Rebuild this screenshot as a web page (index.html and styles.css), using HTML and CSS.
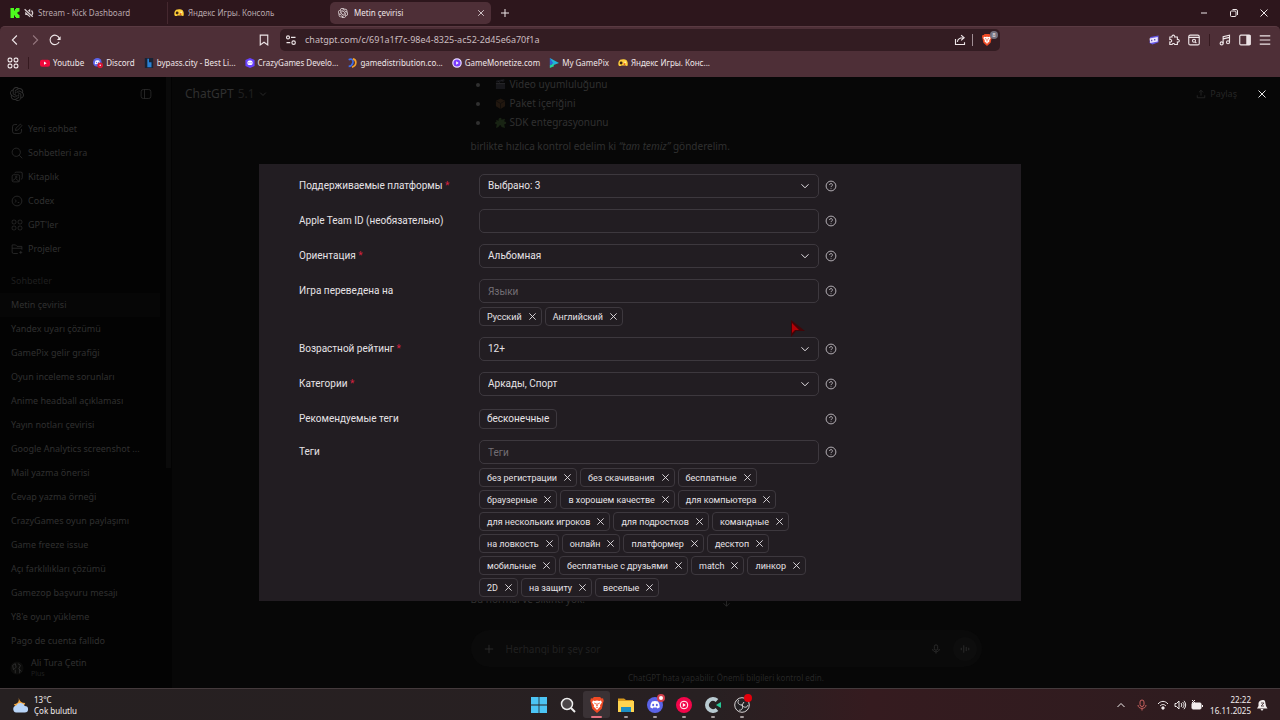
FILE: index.html
```html
<!DOCTYPE html>
<html lang="tr">
<head>
  <meta charset="UTF-8">
  <meta name="viewport" content="width=device-width, initial-scale=1.0">
  <title>Metin çevirisi</title>
  <link rel="stylesheet" href="styles.css">
</head>
<body>
  <svg class="sprite" aria-hidden="true">
    <symbol id="i-x" viewBox="0 0 10 10"><path d="M1.5 1.5l7 7M8.5 1.5l-7 7"/></symbol>
    <symbol id="i-down" viewBox="0 0 10 10"><path d="M1.5 3.3L5 6.8l3.5-3.5"/></symbol>
    <symbol id="i-help" viewBox="0 0 12 12"><circle cx="6" cy="6" r="4.9"/><path d="M4.6 5a1.4 1.4 0 1 1 2 1.2c-.5.2-.6.4-.6.9M6 8.4v.7"/></symbol>
    <symbol id="i-openai" viewBox="0 0 24 24">
      <path fill="currentColor" stroke="none" d="M22.2819 9.8211a5.9847 5.9847 0 0 0-.5157-4.9108 6.0462 6.0462 0 0 0-6.5098-2.9A6.0651 6.0651 0 0 0 4.9807 4.1818a5.9847 5.9847 0 0 0-3.9977 2.9 6.0462 6.0462 0 0 0 .7427 7.0966 5.98 5.98 0 0 0 .511 4.9107 6.051 6.051 0 0 0 6.5146 2.9001A5.9847 5.9847 0 0 0 13.2599 24a6.0557 6.0557 0 0 0 5.7718-4.2058 5.9894 5.9894 0 0 0 3.9977-2.9001 6.0557 6.0557 0 0 0-.7475-7.0729zm-9.022 12.6081a4.4755 4.4755 0 0 1-2.8764-1.0408l.1419-.0804 4.7783-2.7582a.7948.7948 0 0 0 .3927-.6813v-6.7369l2.02 1.1686a.071.071 0 0 1 .038.052v5.5826a4.504 4.504 0 0 1-4.4945 4.4944zm-9.6607-4.1254a4.4708 4.4708 0 0 1-.5346-3.0137l.142.0852 4.783 2.7582a.7712.7712 0 0 0 .7806 0l5.8428-3.3685v2.3324a.0804.0804 0 0 1-.0332.0615L9.74 19.9502a4.4992 4.4992 0 0 1-6.1408-1.6464zM2.3408 7.8956a4.485 4.485 0 0 1 2.3655-1.9728V11.6a.7664.7664 0 0 0 .3879.6765l5.8144 3.3543-2.0201 1.1685a.0757.0757 0 0 1-.071 0l-4.8303-2.7865A4.504 4.504 0 0 1 2.3408 7.872zm16.5963 3.8558L13.1038 8.364 15.1192 7.2a.0757.0757 0 0 1 .071 0l4.8303 2.7913a4.4944 4.4944 0 0 1-.6765 8.1042v-5.6772a.79.79 0 0 0-.407-.667zm2.0107-3.0231l-.142-.0852-4.7735-2.7818a.7759.7759 0 0 0-.7854 0L9.409 9.2297V6.8974a.0662.0662 0 0 1 .0284-.0615l4.8303-2.7866a4.4992 4.4992 0 0 1 6.6802 4.66zM8.3065 12.863l-2.02-1.1638a.0804.0804 0 0 1-.038-.0567V6.0742a4.4992 4.4992 0 0 1 7.3757-3.4537l-.142.0805L8.704 5.459a.7948.7948 0 0 0-.3927.6813zm1.0976-2.3654l2.602-1.4998 2.6069 1.4998v2.9994l-2.5974 1.4997-2.6067-1.4997Z"/>
    </symbol>
    <symbol id="i-yandex" viewBox="0 0 14 12"><path fill="#ffcf3a" stroke="none" d="M3 1.5C5 .2 10 .2 12 2c1.500 1.500 2 5 1.500 7-.4 1.600-2 1.300-3 .5H5C3 11 .8 10.500.5 8 .3 5.500 1 3 3 1.500z"/><circle cx="4.400" cy="6" r="2" fill="#3c2413" stroke="none"/><circle cx="10" cy="4.800" r="1" fill="#fff" stroke="none"/><circle cx="9" cy="7.500" r="1.200" fill="#d9442a" stroke="none"/></symbol>
    <symbol id="i-discord" viewBox="0 0 16 16"><circle cx="8" cy="8" r="8" fill="#5b63e8" stroke="none"/><path fill="#fff" stroke="none" d="M5 4.500Q8 3.600 11 4.500 12.800 7 12.800 10.300 11.500 11.400 10.300 11.500L9.700 10.500H6.300L5.700 11.500Q4.500 11.400 3.200 10.300 3.200 7 5 4.500z"/><ellipse cx="6.200" cy="8" rx="1" ry="1.200" fill="#5b63e8" stroke="none"/><ellipse cx="9.800" cy="8" rx="1" ry="1.200" fill="#5b63e8" stroke="none"/></symbol>
    <symbol id="i-brave" viewBox="0 0 16 18"><path fill="#f04a24" stroke="none" d="M4.500 0h7l1.500 1.600 1.800-.1.800 3-.6 1.500-1.600 7.200L8 18l-5.400-4.800L1 6 .4 4.500l.8-3 1.800.1z"/><path fill="#fff" stroke="none" d="M3.500 4l2 .4L8 4l2.500.4 2-.4 1 2.200-2.200 3 .5 1.500L8 14.500l-3.800-3.800.5-1.500-2.200-3z"/><path fill="#f04a24" stroke="none" d="M4.500 6.300l2.200.6-.6 1.400zM11.500 6.300l-2.200.6.6 1.400zM7.500 7h1l.3 3-0.800.6-.8-.6zM6.500 11.500h3L8 12.700z"/></symbol>
    <symbol id="i-grid" viewBox="0 0 16 16"><rect x="1.500" y="1.500" width="5" height="5" rx="1.800"/><rect x="9.500" y="1.500" width="5" height="5" rx="1.800"/><rect x="1.500" y="9.500" width="5" height="5" rx="1.800"/><rect x="9.500" y="9.500" width="5" height="5" rx="1.800"/></symbol>
  </svg>

  <header class="browser">
    <div class="tabs">
      <a class="tab" href="#">
        <svg class="icon" viewBox="0 0 10 10"><path fill="#4dfa1e" stroke="none" d="M.5 0H4v2.500h1V1h1V0h3.500v3.500h-1V4h-1v2h1v1h1v3H6V9H5V7.500H4V10H.5z"/></svg>
        <svg class="icon" viewBox="0 0 16 16"><path fill="#d8cfd1" stroke="none" d="M2 5h3l5-4v14l-5-4H2z"/><path stroke="#2d161c" stroke-width="4" d="M1 2l13 12"/><path stroke="#d8cfd1" stroke-width="2" d="M1 2l13 12M12 4c2 2 2 5 1 7"/></svg>
        <span>Stream - Kick Dashboard</span>
      </a>
      <a class="tab divided" href="#">
        <svg class="icon"><use href="#i-yandex"/></svg>
        <span>Яндекс Игры. Консоль</span>
      </a>
      <a class="tab active" href="#">
        <svg class="icon"><use href="#i-openai"/></svg>
        <span>Metin çevirisi</span>
        <button class="tab-close" aria-label="Kapat"><svg><use href="#i-x"/></svg></button>
      </a>
      <button class="new-tab" aria-label="Yeni sekme"><svg class="icon" viewBox="0 0 10 10"><path d="M5 1v8M1 5h8"/></svg></button>
      <div class="window-buttons">
        <button aria-label="Simge durumu"><svg class="icon" viewBox="0 0 10 10"><path d="M2 5h6"/></svg></button>
        <button aria-label="Önceki boyut"><svg class="icon" viewBox="0 0 10 10"><rect x="1.500" y="3" width="5.500" height="5.500" rx="1"/><path d="M3.500 1.500h3.500a1.500 1.500 0 0 1 1.500 1.500v4"/></svg></button>
        <button aria-label="Pencereyi kapat"><svg class="icon"><use href="#i-x"/></svg></button>
      </div>
    </div>

    <div class="toolbar">
      <div class="nav">
        <button aria-label="Geri"><svg viewBox="0 0 16 16"><path d="M10.500 2L4.500 8l6 6"/></svg></button>
        <button class="dim" aria-label="İleri"><svg viewBox="0 0 16 16"><path d="M5.500 2l6 6-6 6"/></svg></button>
        <button aria-label="Yenile"><svg viewBox="0 0 16 16"><path d="M13.500 10.500A6.300 6.300 0 1 1 13.800 6"/><path fill="currentColor" stroke="none" d="M15.500 3v5h-5z"/></svg></button>
        <button class="bookmark-btn" aria-label="Yer imi"><svg viewBox="0 0 16 16"><path d="M3 1.500h10v13L8 11l-5 3.500z"/></svg></button>
      </div>
      <div class="address">
        <svg viewBox="0 0 16 16"><circle cx="4" cy="4.500" r="2"/><path d="M8 4.500h6M2 11.500h5"/><circle cx="11.500" cy="11.500" r="2.300"/></svg>
        <input type="text" aria-label="Adres" value="chatgpt.com/c/691a1f7c-98e4-8325-ac52-2d45e6a70f1a">
        <button aria-label="Bağlantıyı paylaş"><svg viewBox="0 0 16 16"><path d="M2 6.500V14h12v-3M4.500 10.500c.5-4 3-5.500 7.500-5.500M9.500 1.500L13.500 5l-4 3.500"/></svg></button>
        <span class="line"></span>
        <button class="shield" aria-label="Brave Shields"><svg><use href="#i-brave"/></svg><span class="count">8</span></button>
      </div>
      <div class="extensions">
        <button aria-label="Uzantı"><svg viewBox="0 0 16 16"><path fill="#6658e8" stroke="none" d="M3 4l11-2v9L6 14 2 12z"/><path fill="#eee8ff" stroke="none" d="M2 6l11-2v6L3 12z"/><path stroke="#493aa8" d="M5 7.500v2M9 6.500v2"/></svg></button>
        <button aria-label="Uzantılar"><svg viewBox="0 0 16 16"><path d="M2.500 4h2.800a1.900 1.900 0 1 1 3.600 0h3.600v3.200a1.900 1.900 0 1 1 0 3.600V14H9a1.900 1.900 0 0 0-3.600 0h-3v-3.200a1.900 1.900 0 1 0 0-3.600z"/></svg></button>
        <button aria-label="Sekme ara"><svg viewBox="0 0 16 16"><rect x="1" y="1.500" width="14" height="13" rx="2"/><path d="M1 4.500h14M9.500 10.500l1.700 1.700"/><circle cx="8" cy="9" r="2"/></svg></button>
        <span class="line"></span>
        <button aria-label="Medya"><svg viewBox="0 0 16 16"><circle cx="3.500" cy="12.500" r="2"/><circle cx="12" cy="11" r="2"/><path d="M5.500 12.500V3.500L14 1.500V11M5.500 6.500L14 4.500"/></svg></button>
        <button aria-label="Kenar çubuğu"><svg viewBox="0 0 16 16"><rect x="1" y="1.500" width="14" height="13" rx="1.500"/><path fill="#ece2e5" d="M10.500 2H14.500v12h-4z"/></svg></button>
        <button aria-label="Menü"><svg viewBox="0 0 16 16"><path d="M1 2.500h14M1 8h14M1 13.500h14"/></svg></button>
      </div>
    </div>

    <nav class="bookmarks">
      <button class="apps" aria-label="Uygulamalar"><svg><use href="#i-grid"/></svg></button>
      <a href="#"><svg class="icon" viewBox="0 0 12 12"><rect y="2" width="12" height="8.500" rx="2.500" fill="#f0093c" stroke="none"/><path fill="#fff" stroke="none" d="M4.800 4.300L8 6.200 4.800 8z"/></svg><span>Youtube</span></a>
      <a href="#"><svg class="icon" viewBox="0 0 16 16"><use href="#i-discord" width="14" height="14"/><circle cx="11.500" cy="11.500" r="4.500" fill="#d81532" stroke="none"/><circle cx="11.500" cy="11.500" r="1.200" fill="#fff" stroke="none"/></svg><span>Discord</span></a>
      <a href="#"><svg class="icon" viewBox="0 0 12 12"><rect x="1" width="10" height="12" fill="#182336" stroke="none"/><path fill="#2a80d4" stroke="none" d="M4 1h2v4h3v6H4z"/></svg><span>bypass.city - Best Li...</span></a>
      <a href="#"><svg class="icon" viewBox="0 0 12 12"><path fill="#6842ff" stroke="none" d="M6 0l5.500 2.500v7L6 12 .5 9.500v-7z"/><rect x="3" y="3" width="6" height="5.500" rx="2" fill="#fff" stroke="none"/><path stroke="#6842ff" d="M4.700 5v1.500M7.300 5v1.500"/></svg><span>CrazyGames Develo...</span></a>
      <a href="#"><svg class="icon" viewBox="0 0 12 12"><path stroke="#3f6ee8" stroke-width="2" d="M2 2c4-2 6 1 5 4-1 3-3 4-5 4"/><path stroke="#f2a12c" stroke-width="2" d="M7 1c5 1 5 8-1 10"/></svg><span>gamedistribution.co...</span></a>
      <a href="#"><svg class="icon" viewBox="0 0 12 12"><circle cx="6" cy="6" r="5" fill="#7a3cff" stroke="#e8dcff" stroke-width="1.500"/><path fill="#fff" stroke="none" d="M5 4l3 2-3 2z"/></svg><span>GameMonetize.com</span></a>
      <a href="#"><svg class="icon" viewBox="0 0 12 12"><path fill="#20b7d8" stroke="none" d="M1 0l11 6-8 3z"/><path fill="#2b65d9" stroke="none" d="M1 0l4 6-4 4z"/><path fill="#26d59b" stroke="none" d="M1 9l4-2 1 3-5 2z"/></svg><span>My GamePix</span></a>
      <a href="#"><svg class="icon"><use href="#i-yandex"/></svg><span>Яндекс Игры. Конс...</span></a>
    </nav>
  </header>

  <div class="page">
    <aside class="sidebar">
      <div class="sidebar-top">
        <svg class="logo"><use href="#i-openai"/></svg>
        <svg viewBox="0 0 16 16"><rect x="1.500" y="2" width="13" height="12" rx="3"/><path d="M6 2v12"/></svg>
      </div>
      <nav class="menu">
        <a href="#"><svg viewBox="0 0 16 16"><path d="M8 2H5a3 3 0 0 0-3 3v6a3 3 0 0 0 3 3h6a3 3 0 0 0 3-3V8M6 10l.5-3 6-5.500 2 2L9 9.500z"/></svg>Yeni sohbet</a>
        <a href="#"><svg viewBox="0 0 16 16"><circle cx="7" cy="7" r="5.500"/><path d="M11 11l4 4"/></svg>Sohbetleri ara</a>
        <a href="#"><svg viewBox="0 0 16 16"><rect x="1.500" y="5" width="10" height="9.500" rx="2"/><path d="M5 3a2 2 0 0 1 2-1.500h6A2 2 0 0 1 15 4v5a2 2 0 0 1-1.500 2M2 13l4-3 5 4"/><circle cx="7" cy="8" r="1"/></svg>Kitaplık</a>
        <a href="#"><svg viewBox="0 0 16 16"><circle cx="8" cy="8" r="6.500"/><path d="M5.500 6l1.500 2-1.500 2M9 10h2"/></svg>Codex</a>
        <a href="#"><svg><use href="#i-grid"/></svg>GPT'ler</a>
        <a href="#"><svg viewBox="0 0 16 16"><path d="M9 14H3.500a2 2 0 0 1-2-2V2.500H6L8 4.500h6.500V9M1.500 7h13M13 10.500v4M11 12.500h4"/></svg>Projeler</a>
      </nav>
      <nav class="chats">
        <h2>Sohbetler</h2>
        <a class="current" href="#">Metin çevirisi</a>
        <a href="#">Yandex uyarı çözümü</a>
        <a href="#">GamePix gelir grafiği</a>
        <a href="#">Oyun inceleme sorunları</a>
        <a href="#">Anime headball açıklaması</a>
        <a href="#">Yayın notları çevirisi</a>
        <a href="#">Google Analytics screenshot ...</a>
        <a href="#">Mail yazma önerisi</a>
        <a href="#">Cevap yazma örneği</a>
        <a href="#">CrazyGames oyun paylaşımı</a>
        <a href="#">Game freeze issue</a>
        <a href="#">Açı farklılıkları çözümü</a>
        <a href="#">Gamezop başvuru mesajı</a>
        <a href="#">Y8'e oyun yükleme</a>
        <a href="#">Pago de cuenta fallido</a>
      </nav>
      <div class="account">
        <svg viewBox="0 0 16 16"><circle cx="8" cy="8" r="7.500" fill="#0c0c0b" stroke="none"/><path d="M3 5l3-2 1 4-3 3zM9 3l3 2-2 4 3 3M6 10v4M11 9v5"/></svg>
        <div>
          <div>Ali Tura Çetin</div>
          <small>Plus</small>
        </div>
      </div>
    </aside>

    <main class="chat">
      <div class="chat-top">
        <button class="model">ChatGPT <span>5.1</span> <svg><use href="#i-down"/></svg></button>
        <button class="share"><svg viewBox="0 0 12 12"><path d="M1.500 7.500v3h9v-3M6 8V1.500M3.500 4L6 1.500 8.500 4"/></svg>Paylaş</button>
      </div>
      <div class="thread">
        <ul>
          <li><svg viewBox="0 0 12 12"><path fill="#17171b" stroke="none" d="M1 5h10v6H1zM1 2l9-2 .5 2L1.500 4z"/><path stroke="#29292d" d="M1 5h10M3 2l2 2M7 1l2 2"/></svg>Video uyumluluğunu</li>
          <li><svg viewBox="0 0 12 12"><path fill="#21170f" stroke="none" d="M6 .5l5 2.500v6l-5 3-5-3V3z"/><path stroke="#120d0a" d="M1 3l5 3 5-3M6 6v6"/></svg>Paket içeriğini</li>
          <li><svg viewBox="0 0 12 12"><path fill="#182313" stroke="none" d="M1 3l3 1c-1-4 4-4 3-1l4-1-1 3c3 0 3 3 0 3l1 4-4-1c0-3-3-2-3 0l-3 1 1-4c-3 0-2-3 0-3z"/></svg>SDK entegrasyonunu</li>
        </ul>
        <p>birlikte hızlıca kontrol edelim ki <em>“tam temiz”</em> gönderelim.</p>
        <p class="last">Bu normal ve sıkıntı yok.</p>
        <svg class="to-bottom" viewBox="0 0 12 12"><path d="M6 1v10M2 7l4 4 4-4"/></svg>
      </div>
      <div class="composer">
        <svg viewBox="0 0 12 12"><path d="M6 1v10M1 6h10"/></svg>
        <input type="text" aria-label="Mesaj" placeholder="Herhangi bir şey sor">
        <svg viewBox="0 0 12 12"><rect x="4" y="1" width="4" height="6.500" rx="2"/><path d="M2 6c0 4.500 8 4.500 8 0M6 9.500v2"/></svg>
        <button aria-label="Sesli mod"><svg viewBox="0 0 12 12"><path d="M1.500 4.500v3M4.500 1.500v9M7.500 3.500v5M10.500 4.500v3"/></svg></button>
      </div>
      <p class="note">ChatGPT hata yapabilir. Önemli bilgileri kontrol edin.</p>
    </main>

    <div class="overlay">
      <button class="close" aria-label="Kapat"><svg><use href="#i-x"/></svg></button>
      <form class="dialog">
        <div class="row">
          <label for="platforms">Поддерживаемые платформы <b>*</b></label>
          <div class="field"><div class="select"><select id="platforms"><option>Выбрано: 3</option></select><svg><use href="#i-down"/></svg></div></div>
          <svg class="help"><use href="#i-help"/></svg>
        </div>
        <div class="row">
          <label for="team">Apple Team ID (необязательно)</label>
          <div class="field"><input id="team" type="text"></div>
          <svg class="help"><use href="#i-help"/></svg>
        </div>
        <div class="row">
          <label for="orientation">Ориентация <b>*</b></label>
          <div class="field"><div class="select"><select id="orientation"><option>Альбомная</option></select><svg><use href="#i-down"/></svg></div></div>
          <svg class="help"><use href="#i-help"/></svg>
        </div>
        <div class="row">
          <label for="langs">Игра переведена на</label>
          <div class="field">
            <input id="langs" type="text" placeholder="Языки">
            <div class="chips">
              <span class="chip">Русский<button type="button" aria-label="Удалить"><svg><use href="#i-x"/></svg></button></span>
              <span class="chip">Английский<button type="button" aria-label="Удалить"><svg><use href="#i-x"/></svg></button></span>
            </div>
          </div>
          <svg class="help"><use href="#i-help"/></svg>
        </div>
        <div class="row">
          <label for="age">Возрастной рейтинг <b>*</b></label>
          <div class="field"><div class="select"><select id="age"><option>12+</option></select><svg><use href="#i-down"/></svg></div></div>
          <svg class="help"><use href="#i-help"/></svg>
        </div>
        <div class="row">
          <label for="categories">Категории <b>*</b></label>
          <div class="field"><div class="select"><select id="categories"><option>Аркады, Спорт</option></select><svg><use href="#i-down"/></svg></div></div>
          <svg class="help"><use href="#i-help"/></svg>
        </div>
        <div class="row suggested">
          <span class="label">Рекомендуемые теги</span>
          <div class="field"><button type="button" class="suggestion">бесконечные</button></div>
          <svg class="help"><use href="#i-help"/></svg>
        </div>
        <div class="row">
          <label for="tags">Теги</label>
          <div class="field">
            <input id="tags" type="text" placeholder="Теги">
            <div class="chips">
              <span class="chip">без регистрации<button type="button" aria-label="Удалить"><svg><use href="#i-x"/></svg></button></span>
              <span class="chip">без скачивания<button type="button" aria-label="Удалить"><svg><use href="#i-x"/></svg></button></span>
              <span class="chip">бесплатные<button type="button" aria-label="Удалить"><svg><use href="#i-x"/></svg></button></span>
              <span class="chip">браузерные<button type="button" aria-label="Удалить"><svg><use href="#i-x"/></svg></button></span>
              <span class="chip">в хорошем качестве<button type="button" aria-label="Удалить"><svg><use href="#i-x"/></svg></button></span>
              <span class="chip">для компьютера<button type="button" aria-label="Удалить"><svg><use href="#i-x"/></svg></button></span>
              <span class="chip">для нескольких игроков<button type="button" aria-label="Удалить"><svg><use href="#i-x"/></svg></button></span>
              <span class="chip">для подростков<button type="button" aria-label="Удалить"><svg><use href="#i-x"/></svg></button></span>
              <span class="chip">командные<button type="button" aria-label="Удалить"><svg><use href="#i-x"/></svg></button></span>
              <span class="chip">на ловкость<button type="button" aria-label="Удалить"><svg><use href="#i-x"/></svg></button></span>
              <span class="chip">онлайн<button type="button" aria-label="Удалить"><svg><use href="#i-x"/></svg></button></span>
              <span class="chip">платформер<button type="button" aria-label="Удалить"><svg><use href="#i-x"/></svg></button></span>
              <span class="chip">десктоп<button type="button" aria-label="Удалить"><svg><use href="#i-x"/></svg></button></span>
              <span class="chip">мобильные<button type="button" aria-label="Удалить"><svg><use href="#i-x"/></svg></button></span>
              <span class="chip">бесплатные с друзьями<button type="button" aria-label="Удалить"><svg><use href="#i-x"/></svg></button></span>
              <span class="chip">match<button type="button" aria-label="Удалить"><svg><use href="#i-x"/></svg></button></span>
              <span class="chip">линкор<button type="button" aria-label="Удалить"><svg><use href="#i-x"/></svg></button></span>
              <span class="chip">2D<button type="button" aria-label="Удалить"><svg><use href="#i-x"/></svg></button></span>
              <span class="chip">на защиту<button type="button" aria-label="Удалить"><svg><use href="#i-x"/></svg></button></span>
              <span class="chip">веселые<button type="button" aria-label="Удалить"><svg><use href="#i-x"/></svg></button></span>
            </div>
          </div>
          <svg class="help"><use href="#i-help"/></svg>
        </div>
        <svg class="cursor" viewBox="0 0 14 18"><path fill="#430508" stroke="none" d="M0 0l14 11H5l-5 6z"/><path fill="#b40006" stroke="none" d="M1 3l7 7H4l-3 3z"/></svg>
      </form>
    </div>
  </div>

  <footer class="taskbar">
    <div class="weather">
      <svg viewBox="0 0 18 16"><path fill="#f3a63c" stroke="none" d="M7 0c1 4 3 6 7 6-1 5-10 6-12 1 4 0 6-3 5-7z"/><path fill="#b9d5f8" stroke="none" d="M4.500 16a3.800 3.800 0 0 1 0-7.500 5 5 0 0 1 9 .5 3.500 3.500 0 0 1 0 7z"/></svg>
      <div>
        <div>13°C</div>
        <div>Çok bulutlu</div>
      </div>
    </div>
    <div class="apps-row">
      <button aria-label="Başlat"><svg viewBox="0 0 16 16"><path fill="#4cc5f5" stroke="none" d="M0 0h7.600v7.600H0zM8.400 0H16v7.600H8.400zM0 8.400h7.600V16H0zM8.400 8.400H16V16H8.400z"/></svg></button>
      <button aria-label="Ara"><svg viewBox="0 0 16 16"><circle cx="7" cy="7" r="5.500" fill="#4b4648" stroke="#eee" stroke-width="1.500"/><path stroke="#eee" stroke-width="2" d="M11 11l4 4"/></svg></button>
      <button class="focused" aria-label="Brave"><svg><use href="#i-brave"/></svg></button>
      <button class="open" aria-label="Dosya Gezgini"><svg viewBox="0 0 16 16"><path fill="#d99a1c" stroke="none" d="M0 1.500h6L8 3h7v5H0z"/><path fill="#ffd44f" stroke="none" d="M0 4h16v11H0z"/><path fill="#1c8fc4" stroke="none" d="M3 10h10v5H3z"/></svg></button>
      <button class="open" aria-label="Discord"><svg><use href="#i-discord"/></svg><span class="badge live"></span></button>
      <button class="open" aria-label="YouTube Music"><svg viewBox="0 0 16 16"><circle cx="8" cy="8" r="8" fill="#f4054a" stroke="none"/><circle cx="8" cy="8" r="3.800" stroke="#fff"/><path fill="#fff" stroke="none" d="M6.800 6l3 2-3 2z"/></svg></button>
      <button class="open" aria-label="Camtasia"><svg viewBox="0 0 16 16"><path stroke="#b9cbd2" stroke-width="4" d="M12 3.500A6 6 0 1 0 12 12.500"/><path fill="#27c796" stroke="none" d="M11 8l5-3v6z"/></svg></button>
      <button class="open" aria-label="OBS"><svg viewBox="0 0 16 16"><circle cx="8" cy="8" r="7.300" fill="#252225" stroke="#d7d2d3"/><path stroke="#d7d2d3" d="M8 8C4 8 3 5 5 3M8 8c2 3 5 3 6 0M8 8c2 3-1 6-3 5M8 8l2-3"/></svg><span class="badge"></span></button>
    </div>
    <div class="tray">
      <svg viewBox="0 0 12 12"><path d="M2.500 8L6 4.500 9.500 8"/></svg>
      <svg class="mic" viewBox="0 0 12 12"><rect x="4" y="1" width="4" height="6.500" rx="2"/><path d="M2 6c0 4.500 8 4.500 8 0M6 9.500v2"/></svg>
      <svg viewBox="0 0 12 12"><path d="M1 5c3-3.500 7-3.500 10 0M3 7c2-2 4-2 6 0"/><circle cx="6" cy="9" r="1.200" fill="#f2eeee"/></svg>
      <svg viewBox="0 0 12 12"><path d="M1 4.500h1.500L5 2v8L2.500 7.500H1zM7 4c1 1 1 3 0 4M8.500 3c2 2 2 4 0 6M10 1.800c2.200 3 2.200 5.500 0 8.400"/></svg>
      <svg viewBox="0 0 12 12"><rect x="1" y="4" width="9" height="6" rx="1" fill="#f2eeee"/><path d="M11.500 6v2M1 1l3 3M4 1L1 4"/></svg>
      <div class="clock">
        <div>22:22</div>
        <div>16.11.2025</div>
      </div>
      <svg viewBox="0 0 12 12"><path fill="#f2eeee" stroke="none" d="M1 9.500L2.500 7V4C3 1 8 0 9 2l1 5 1.500 2.500zM4.500 10h3l-1.500 2z"/><path stroke="#5d4c4f" d="M5 4h3L5 7h3"/></svg>
    </div>
  </footer>
</body>
</html>
```

FILE: styles.css
```css
* {
  box-sizing: border-box;
}

body {
  margin: 0;
  height: 100vh;
  display: flex;
  flex-direction: column;
  overflow: hidden;
  background: #2d161c;
  color: #eee6e8;
  font-family: "Noto Sans", "Open Sans", sans-serif;
  font-size: 9px;
  line-height: 12px;
}

a {
  color: inherit;
  text-decoration: none;
}

button,
input,
select {
  font: inherit;
  color: inherit;
  background: none;
  border: none;
  padding: 0;
  margin: 0;
}

input:focus,
select:focus {
  outline: none;
}

button {
  display: flex;
  align-items: center;
  justify-content: center;
}

svg {
  width: 12px;
  height: 12px;
  flex: none;
  fill: none;
  stroke: currentColor;
  overflow: visible;
}

.sprite {
  position: absolute;
  width: 0;
  height: 0;
}

.icon {
  width: 10px;
  height: 10px;
}

.line {
  width: 1px;
  height: 12px;
  background: #806a70;
}

/* Browser chrome */
.tabs,
.bookmarks {
  font-size: 8px;
}

.tabs {
  display: flex;
  align-items: center;
  height: 26px;
  padding: 0 1px 0 4px;
}

.tab {
  display: flex;
  align-items: center;
  gap: 4px;
  width: 163px;
  height: 22px;
  padding: 0 6px;
  color: #b9a8ad;
}

.tab.divided {
  border-left: 1px solid #45282f;
}

.tab.active {
  width: 161px;
  padding-left: 8px;
  border-radius: 5px;
  background: #4e2f37;
  color: #eee6e8;
}

.tab.active span {
  padding-left: 2px;
}

.tab-close {
  margin-left: auto;
}

.tab-close svg {
  width: 8px;
  height: 8px;
}

.new-tab {
  width: 28px;
}

.window-buttons {
  display: flex;
  margin-left: auto;
}

.window-buttons button {
  width: 30px;
}

.toolbar {
  display: flex;
  align-items: center;
  height: 27px;
  padding: 0 9px;
  background: #4e2f37;
  border-top: 1px solid #5a3a42;
  border-radius: 5px 5px 0 0;
}

.toolbar svg,
.apps svg {
  stroke-width: 1.5;
}

.nav,
.extensions {
  display: flex;
  align-items: center;
  flex: 1;
  gap: 8px;
}

.nav .dim {
  color: #94767e;
}

.bookmark-btn {
  margin-left: auto;
  margin-right: 10px;
}

.address {
  display: flex;
  align-items: center;
  gap: 6px;
  flex: 0 1 720px;
  height: 22px;
  padding: 0 1px 0 5px;
  border-radius: 5px;
  background: #331c22;
}

.address input {
  flex: 1;
  color: #cbbcc0;
  padding-left: 2px;
}

.address .line {
  background: #a08e94;
}

.shield {
  position: relative;
  width: 20px;
}

.shield svg {
  margin-right: 4px;
}

.count {
  position: absolute;
  top: -3px;
  right: 1px;
  width: 8px;
  height: 8px;
  border-radius: 4px;
  background: #73707d;
  font-size: 6px;
  line-height: 8px;
}

.extensions {
  justify-content: flex-end;
}

.extensions .line {
  background: #35191f;
  margin: 0 1px;
}

.bookmarks {
  display: flex;
  align-items: center;
  gap: 9px;
  height: 24px;
  padding: 0 7px 4px;
  background: #4e2f37;
}

.bookmarks a {
  display: flex;
  align-items: center;
  gap: 3px;
}

.apps {
  margin-right: 2px;
  padding-right: 9px;
  border-right: 1px solid #35191f;
}

/* Page behind the dialog */
.page {
  position: relative;
  display: flex;
  flex: 1;
  min-height: 0;
  background: #070707;
  color: #303030;
}

.sidebar {
  display: flex;
  flex-direction: column;
  width: 172px;
  padding: 7px 0 0;
  background: #030303;
  background-image: linear-gradient(#0a0a0a, #0a0a0a);
  background-size: 5px 391px;
  background-position: 166px 0;
  background-repeat: no-repeat;
}

.sidebar-top {
  display: flex;
  align-items: center;
  justify-content: space-between;
  height: 20px;
  padding: 0 20px 0 10px;
}

.logo {
  width: 14px;
  height: 14px;
}

.menu {
  padding-top: 13px;
}

.menu a,
.chats a,
.chats h2 {
  display: flex;
  align-items: center;
  gap: 5px;
  height: 24px;
  padding-left: 11px;
}

.chats {
  padding-top: 8px;
}

.chats h2 {
  margin: 0;
  font-size: 9px;
  font-weight: 400;
  color: #1f1f1f;
}

.chats .current {
  margin-right: 12px;
  background: #060606;
}

.account {
  display: flex;
  align-items: center;
  gap: 7px;
  padding: 4px 10px 0;
}

.account svg {
  width: 14px;
  height: 14px;
}

.account small {
  display: block;
  font-size: 7px;
  line-height: 10px;
  color: #1f1f1f;
}

.chat {
  position: relative;
  display: flex;
  flex-direction: column;
  align-items: center;
  flex: 1;
  min-width: 0;
}

.chat-top {
  position: absolute;
  top: 0;
  left: 0;
  right: 0;
  display: flex;
  justify-content: space-between;
  height: 34px;
  padding: 0 43px 0 13px;
}

.model {
  gap: 4px;
  font-size: 12px;
}

.model span {
  color: #1f1f1f;
}

.model svg {
  width: 8px;
  height: 8px;
}

.share {
  gap: 4px;
  color: #262626;
}

.share svg {
  width: 10px;
}

.thread {
  position: relative;
  display: flex;
  flex-direction: column;
  flex: 1;
  width: 100%;
  max-width: 511px;
  margin-top: -2px;
  font-size: 10px;
  line-height: 18px;
}

.thread ul {
  margin: 0;
  padding-left: 19px;
}

.thread li {
  padding: 0 0 1px;
}

.thread li svg {
  width: 11px;
  height: 11px;
  margin-left: 5px;
  margin-right: 4px;
  vertical-align: -2px;
}

.thread p {
  margin: 5px 0;
}

.thread .last {
  margin-top: auto;
  margin-bottom: 22px;
}

.to-bottom {
  position: absolute;
  left: 0;
  right: 0;
  bottom: 23px;
  width: 9px;
  height: 9px;
  margin: 0 auto;
}

.composer {
  display: flex;
  align-items: center;
  gap: 12px;
  width: 100%;
  max-width: 511px;
  height: 37px;
  padding: 0 5px 0 13px;
  border-radius: 19px;
  background: #0a0a0a;
  font-size: 10px;
}

.composer svg {
  width: 10px;
  height: 10px;
}

.composer input {
  flex: 1;
}

.composer input::placeholder {
  color: #202020;
  opacity: 1;
}

.composer button {
  width: 24px;
  height: 24px;
  border-radius: 12px;
  background: #0d0d0d;
}

.note {
  margin: 5px 0 4px;
  font-size: 8px;
  color: #262626;
}

/* Dialog */
.overlay {
  position: absolute;
  inset: 0;
  display: flex;
  align-items: center;
  justify-content: center;
}

.close {
  position: absolute;
  top: 12px;
  right: 13px;
  color: #e6e6e6;
}

.close svg {
  width: 10px;
  height: 10px;
}

.dialog {
  position: relative;
  display: flex;
  flex-direction: column;
  gap: 11px;
  width: 762px;
  max-width: 100%;
  padding: 10px 40px 4px;
  background: #221d22;
  color: #e6e2e6;
  font-family: Roboto, "Noto Sans", sans-serif;
  font-size: 10px;
}

.row {
  display: flex;
  align-items: flex-start;
}

.row label,
.row .label {
  width: 180px;
  line-height: 24px;
}

.row b {
  color: #d4213f;
  font-weight: 400;
}

.field {
  width: 340px;
}

.field input,
.field select {
  display: block;
  width: 100%;
  height: 24px;
  padding: 0 8px;
  border: 1px solid #3d383e;
  border-radius: 5px;
  appearance: none;
}

.field input::placeholder {
  color: #736e74;
  opacity: 1;
}

.select {
  position: relative;
}

.select svg {
  position: absolute;
  top: 7px;
  right: 9px;
  width: 10px;
  height: 10px;
  pointer-events: none;
}

.help {
  margin: 6px 0 0 6px;
  color: #b3aeb4;
}

.chips {
  display: flex;
  flex-wrap: wrap;
  gap: 3px;
  padding-top: 4px;
}

.chip,
.suggestion {
  display: flex;
  align-items: center;
  gap: 6px;
  height: 19px;
  padding: 0 4px 0 7px;
  border: 1px solid #3d383e;
  border-radius: 4px;
  font-size: 9px;
}

.chip svg {
  width: 9px;
  height: 9px;
  display: block;
}

.suggested {
  padding-top: 2px;
}

.suggested .label {
  line-height: 20px;
}

.suggestion {
  height: 20px;
  padding: 0 7px;
  font-size: 10px;
}

.suggested .help {
  margin-top: 4px;
}

.cursor {
  position: absolute;
  top: 156px;
  left: 532px;
  width: 14px;
  height: 18px;
}

/* Windows taskbar */
.taskbar {
  display: flex;
  align-items: center;
  height: 32px;
  border-top: 1px solid #443a3c;
  background: linear-gradient(90deg, #262021 0%, #282022 56%, #351b1f 68%, #2d1c1f 100%);
  color: #f2eeee;
  font-size: 8px;
  line-height: 11px;
}

.weather,
.tray {
  display: flex;
  align-items: center;
  flex: 1;
}

.weather {
  gap: 5px;
  padding-left: 12px;
}

.weather svg {
  width: 17px;
  height: 16px;
}

.apps-row {
  display: flex;
  gap: 2px;
}

.apps-row button {
  position: relative;
  width: 27px;
  height: 27px;
  border-radius: 3px;
}

.apps-row svg {
  width: 16px;
  height: 16px;
}

.apps-row .focused {
  background: #3a3235;
}

.apps-row .open::after,
.apps-row .focused::after {
  content: "";
  position: absolute;
  bottom: 0;
  width: 4px;
  height: 2px;
  border-radius: 1px;
  background: #a59c9e;
}

.apps-row .focused::after {
  width: 11px;
  background: #e4717f;
}

.badge {
  position: absolute;
  top: 3px;
  right: 3px;
  width: 8px;
  height: 8px;
  border-radius: 4px;
  background: #e3000b;
}

.badge.live {
  border: 2px solid #d4404c;
  background: #fff;
}

.tray {
  justify-content: flex-end;
  gap: 5px;
  padding-right: 12px;
}

.tray .mic {
  margin: 0 4px;
  color: #c9615f;
}

.clock {
  margin-left: 2px;
  text-align: right;
}
```
